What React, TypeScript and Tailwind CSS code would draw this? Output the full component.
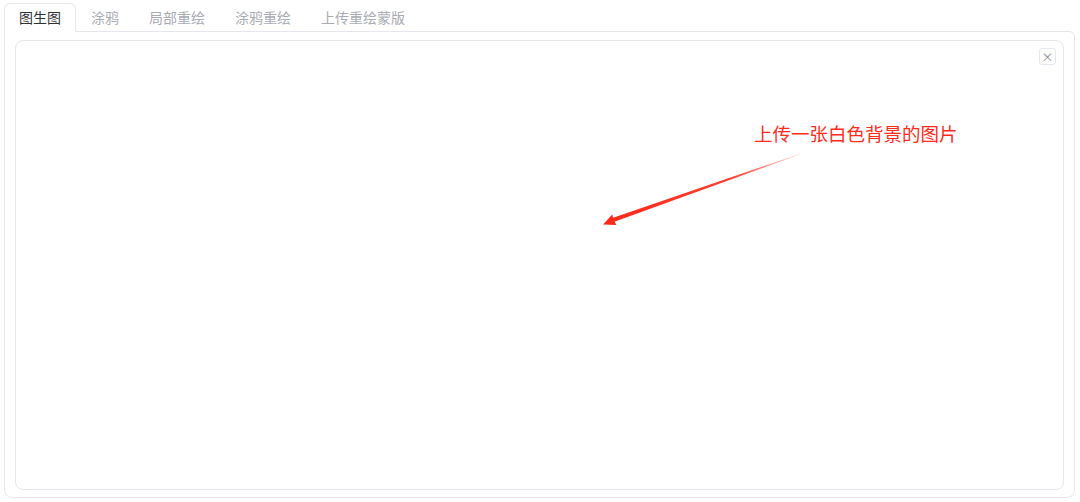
const TABS = ["图生图", "涂鸦", "局部重绘", "涂鸦重绘", "上传重绘蒙版"];

function Arrow() {
  // drawn in page coordinates relative to the canvas box (origin at 16,41)
  const ox = 16;
  const oy = 41;
  const p = (x: number, y: number) => `${x - ox},${y - oy}`;
  return (
    <svg className="pointer-events-none absolute left-0 top-0" width="1046" height="447">
      <defs>
        <linearGradient id="fade" gradientUnits="userSpaceOnUse" x1={800 - ox} y1={154 - oy} x2={612 - ox} y2={220 - oy}>
          <stop offset="0" stopColor="#ff2a1a" stopOpacity="0.15" />
          <stop offset="0.35" stopColor="#ff2a1a" stopOpacity="0.9" />
          <stop offset="1" stopColor="#ff2a1a" />
        </linearGradient>
      </defs>
      <polygon
        points={[p(800.2, 154.3), p(613, 222.3), p(611.6, 218.3), p(799.8, 153.7)].join(" ")}
        fill="url(#fade)"
      />
      <polygon
        points={[p(603, 224.5), p(612.2, 214.6), p(613.6, 219.8), p(616.4, 225)].join(" ")}
        fill="#ff2a1a"
      />
    </svg>
  );
}

export default function App() {
  return (
    <div className="h-[502px] bg-white pl-[4px] pr-[5px] pt-[3px] font-['Noto_Sans_CJK_SC','Noto_Sans',sans-serif]">
      <div className="flex">
        {TABS.map((t, i) => (
          <div
            key={t}
            className={
              i === 0
                ? "relative z-10 -mb-px flex h-[29px] items-center rounded-t-[6px] border border-b-white border-[#e4e7ed] bg-white px-[14px] text-[14px] text-[#303133]"
                : "flex h-[28px] items-center border border-transparent px-[14px] text-[14px] text-[#a8abb2]"
            }
          >
            {t}
          </div>
        ))}
      </div>
      <div className="h-[467px] rounded-b-[8px] rounded-tr-[6px] border border-[#e4e7ed] px-[10px] pb-[7px] pt-[8px]">
        <div className="relative h-full rounded-[8px] border border-[#e4e7ed] bg-white">
          <button className="absolute right-[7px] top-[7px] flex h-[17px] w-[17px] items-center justify-center rounded-[3px] border border-[#e4e7ed] bg-white text-[12px] leading-none text-[#8a8d94]">
            ×
          </button>
          <div className="absolute left-[738px] top-[80px] text-[18.5px] leading-[24px] text-[#ff2a1a]">
            上传一张白色背景的图片
          </div>
          <Arrow />
        </div>
      </div>
    </div>
  );
}
